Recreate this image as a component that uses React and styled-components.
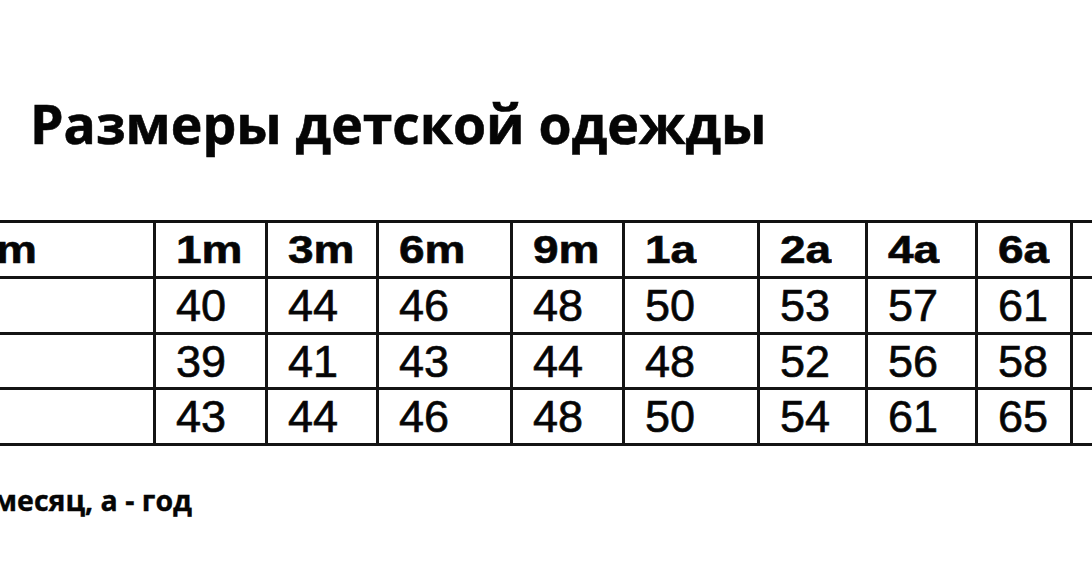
import React from "react";
import styled, { createGlobalStyle } from "styled-components";

const GlobalStyle = createGlobalStyle`
  html, body {
    margin: 0;
    padding: 0;
    background: #ffffff;
  }
`;

const Page = styled.div`
  width: 1092px;
  height: 573px;
  overflow: hidden;
  background: #ffffff;
  color: #050505;
  display: flex;
  flex-direction: column;
`;

const Title = styled.h1`
  margin: 0;
  padding: 94px 0 0 30px;
  font-family: "Open Sans", "Noto Sans", sans-serif;
  font-weight: 700;
  font-size: 53.5px;
  line-height: 60px;
  white-space: nowrap;
  -webkit-text-stroke: 0.6px #050505;
`;

const Table = styled.div`
  margin-top: 66px;
  display: grid;
  /* first column runs off the left edge, last one off the right */
  grid-template-columns: 156px 112px 111px 134px 112px 135px 108px 110px 95px 80px;
  grid-template-rows: 56px 56px 55px 56px;
  border-top: 3px solid #111;
  width: max-content;
`;

const Cell = styled.div`
  box-sizing: border-box;
  border-right: 3px solid #141414;
  border-bottom: 3px solid #141414;
  display: flex;
  align-items: center;
  padding-left: ${(p) => (p.$first ? "0" : "20px")};
  font-family: "Liberation Sans", Arial, sans-serif;
  font-weight: ${(p) => (p.$head ? 700 : 400)};
  font-size: ${(p) => (p.$head ? "46px" : "45px")};
  line-height: 1;
  white-space: nowrap;
  overflow: hidden;
  -webkit-text-stroke: ${(p) => (p.$head ? "0.8px" : "0.7px")} #111;
`;

const HeadText = styled.span`
  display: inline-block;
  transform: scaleY(0.83);
  margin-left: ${(p) => (p.$first ? "-4px" : "0")};
`;

const Note = styled.p`
  margin: 36px 0 0;
  font-family: "Open Sans", "Noto Sans", sans-serif;
  font-weight: 700;
  font-size: 28.5px;
  line-height: 36px;
  white-space: nowrap;
  text-indent: -7px;
  -webkit-text-stroke: 0.4px #050505;
`;

const headers = ["m", "1m", "3m", "6m", "9m", "1a", "2a", "4a", "6a", ""];

const rows = [
  ["", "40", "44", "46", "48", "50", "53", "57", "61", ""],
  ["", "39", "41", "43", "44", "48", "52", "56", "58", ""],
  ["", "43", "44", "46", "48", "50", "54", "61", "65", ""],
];

export default function App() {
  return (
    <Page>
      <GlobalStyle />
      <Title>Размеры детской одежды</Title>
      <Table>
        {headers.map((h, i) => (
          <Cell key={"h" + i} $head $first={i === 0}>
            <HeadText $first={i === 0}>{h}</HeadText>
          </Cell>
        ))}
        {rows.map((row, r) =>
          row.map((v, i) => (
            <Cell key={r + "-" + i} $first={i === 0}>
              {v}
            </Cell>
          ))
        )}
      </Table>
      <Note>месяц, а - год</Note>
    </Page>
  );
}
